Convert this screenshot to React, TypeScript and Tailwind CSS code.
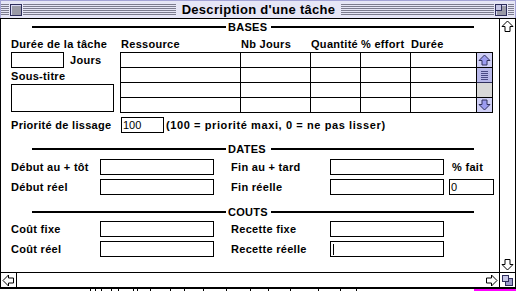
import React from "react";

function Stripes({ className = "" }: { className?: string }) {
  return (
    <div className={`flex flex-col gap-px ${className}`}>
      {[0, 1, 2, 3, 4, 5].map((i) => (
        <div key={i} className="h-px bg-[#7c7c8e]" />
      ))}
    </div>
  );
}

function Rule({ label }: { label: string }) {
  return (
    <div className="flex items-center h-[12px] ml-[21px]">
      <div className="w-[194px] h-[2px] bg-black" />
      <span className="w-[45px] pl-[2px] leading-none">{label}</span>
      <div className="w-[203px] h-[2px] bg-black" />
    </div>
  );
}

function Field({ w, children }: { w: string; children?: React.ReactNode }) {
  return (
    <div className={`${w} h-[16px] border border-black bg-white flex items-center pl-[1px] font-normal tracking-normal`}>
      {children}
    </div>
  );
}

function HollowArrow({ dir }: { dir: "up" | "down" | "left" | "right" }) {
  const rot = { up: 0, down: 180, left: 270, right: 90 }[dir];
  return (
    <svg width="13" height="13" viewBox="0 0 13 13">
      <polygon
        transform={`rotate(${rot} 6.5 6.5)`}
        points="6.5,1 12,6.5 9,6.5 9,11.5 4,11.5 4,6.5 1,6.5"
        fill="white"
        stroke="black"
        strokeWidth="1"
        strokeLinejoin="miter"
      />
    </svg>
  );
}

function ListArrow({ dir }: { dir: "up" | "down" }) {
  return (
    <svg width="13" height="12" viewBox="0 0 13 12">
      <polygon
        transform={dir === "down" ? "rotate(180 6.5 6)" : undefined}
        points="6.5,1 12,6.5 9,6.5 9,11 4,11 4,6.5 1,6.5"
        fill="#9c9cf0"
        stroke="#30305c"
        strokeWidth="1"
      />
    </svg>
  );
}

const cols = [
  { label: "Ressource", head: "w-[120px]", cell: "w-[119px]" },
  { label: "Nb Jours", head: "w-[70px]", cell: "w-[70px] border-l border-black" },
  { label: "Quantité", head: "w-[50px]", cell: "w-[50px] border-l border-black" },
  { label: "% effort", head: "w-[50px]", cell: "w-[50px] border-l border-black" },
  { label: "Durée", head: "w-[66px]", cell: "w-[66px] border-l border-black" },
];

const rows = ["h-[15px] border-b border-black", "h-[15px] border-b border-black", "h-[15px] border-b border-black", "h-[14px]"];

const ticks = [90, 95, 101, 111, 118, 133, 137, 150, 170, 184, 203, 226, 250, 268, 290, 318, 340, 356];

export default function App() {
  return (
    <div className="w-[516px] h-[291px] bg-white overflow-hidden text-black text-[11px] font-bold tracking-[0.3px] font-['Liberation_Sans',Arial,sans-serif]">
      <div className="flex flex-col w-[516px] h-[289px]">
        {/* title bar */}
        <div className="flex items-center h-[18px] shrink-0 bg-[#e6e6f6] border-t border-x border-[#a3a3d6] pr-[1px]">
          <Stripes className="w-[8px]" />
          <div className="ml-[1px] w-[12px] h-[12px] border border-[#2e2e5c] bg-[#9a9aa6] shadow-[inset_1px_1px_0_#d8d8f4]" />
          <Stripes className="ml-[1px] flex-1" />
          <div className="px-[6px] text-[13px] leading-none tracking-[0.3px]">Description d'une tâche</div>
          <Stripes className="flex-1" />
          <div className="ml-[1px] w-[12px] h-[12px] border border-[#2e2e5c] bg-[#9a9aa6] shadow-[inset_1px_1px_0_#d8d8f4] flex items-start justify-start">
            <div className="w-[6px] h-[6px] border-r border-b border-[#2e2e5c] bg-[#c4c4e4]" />
          </div>
          <Stripes className="ml-[1px] w-[6px]" />
        </div>
        <div className="h-px bg-black shrink-0" />

        {/* body */}
        <div className="flex h-[253px] shrink-0 border-x border-black">
          <div className="flex-1 flex flex-col pl-[10px] pt-[2px]">
            <Rule label="BASES" />

            <div className="flex mt-[5px]">
              <div className="w-[109px] flex flex-col">
                <div className="h-[14px] leading-[13px] whitespace-nowrap">Durée de la tâche</div>
                <div className="flex items-center h-[16px]">
                  <Field w="w-[53px]" />
                  <span className="ml-[6px]">Jours</span>
                </div>
                <div className="mt-[2px] h-[13px] leading-[13px]">Sous-titre</div>
                <div className="mt-[1px] w-[103px] h-[28px] border border-black" />
              </div>

              <div className="flex flex-col">
                <div className="flex h-[14px] leading-[13px]">
                  {cols.map((c) => (
                    <div key={c.label} className={`${c.head} pl-[1px] whitespace-nowrap`}>
                      {c.label}
                    </div>
                  ))}
                </div>
                <div className="flex w-[373px] border border-black">
                  <div className="flex flex-col">
                    {rows.map((r, i) => (
                      <div key={i} className={`flex ${r}`}>
                        {cols.map((c) => (
                          <div key={c.label} className={c.cell} />
                        ))}
                      </div>
                    ))}
                  </div>
                  <div className="w-[16px] border-l border-black flex flex-col">
                    <div className="h-[15px] border-b border-black bg-[#cfcff6] flex items-center justify-center">
                      <ListArrow dir="up" />
                    </div>
                    <div className="h-[15px] border-b border-[#30305c] bg-[#b8b8ea] flex flex-col items-center justify-center gap-px">
                      {[0, 1, 2, 3, 4].map((i) => (
                        <div key={i} className="w-[7px] h-px bg-[#4a4a86]" />
                      ))}
                    </div>
                    <div className="h-[15px] border-b border-black bg-[#d8d8d8] bg-[radial-gradient(#8a8a8a_0.6px,transparent_0.7px)] bg-[length:2px_2px]" />
                    <div className="h-[14px] bg-[#cfcff6] flex items-center justify-center">
                      <ListArrow dir="down" />
                    </div>
                  </div>
                </div>
              </div>
            </div>

            <div className="flex items-center h-[16px] mt-[4px]">
              <div className="w-[110px] whitespace-nowrap">Priorité de lissage</div>
              <Field w="w-[43px]">100</Field>
              <span className="ml-[2px] tracking-[0.6px] whitespace-nowrap">(100 = priorité maxi, 0 = ne pas lisser)</span>
            </div>

            <div className="mt-[10px]">
              <Rule label="DATES" />
            </div>
            <div className="flex items-center h-[16px] mt-[4px]">
              <div className="w-[89px]">Début au + tôt</div>
              <Field w="w-[114px]" />
              <div className="ml-[17px] w-[99px]">Fin au + tard</div>
              <Field w="w-[114px]" />
              <div className="ml-[5px] pl-[3px]">% fait</div>
            </div>
            <div className="flex items-center h-[16px] mt-[4px]">
              <div className="w-[89px]">Début réel</div>
              <Field w="w-[114px]" />
              <div className="ml-[17px] w-[99px]">Fin réelle</div>
              <Field w="w-[114px]" />
              <div className="ml-[5px]">
                <Field w="w-[45px]">0</Field>
              </div>
            </div>

            <div className="mt-[11px]">
              <Rule label="COUTS" />
            </div>
            <div className="flex items-center h-[16px] mt-[3px]">
              <div className="w-[89px]">Coût fixe</div>
              <Field w="w-[114px]" />
              <div className="ml-[17px] w-[99px]">Recette fixe</div>
              <Field w="w-[114px]" />
            </div>
            <div className="flex items-center h-[16px] mt-[4px]">
              <div className="w-[89px]">Coût réel</div>
              <Field w="w-[114px]" />
              <div className="ml-[17px] w-[99px]">Recette réelle</div>
              <Field w="w-[114px]">
                <div className="w-px h-[11px] bg-black ml-px" />
              </Field>
            </div>
          </div>

          <div className="w-[16px] border-l border-black flex flex-col justify-between items-center pt-[1px] pb-[1px]">
            <HollowArrow dir="up" />
            <HollowArrow dir="down" />
          </div>
        </div>

        {/* horizontal scroll bar */}
        <div className="flex h-[17px] shrink-0 border-t border-x border-b-2 border-black">
          <div className="w-[16px] border-r border-black flex items-center justify-center">
            <HollowArrow dir="left" />
          </div>
          <div className="flex-1" />
          <div className="w-[15px] flex items-center justify-center">
            <HollowArrow dir="right" />
          </div>
          <div className="w-[16px] border-l border-black flex items-center justify-center">
            <svg width="11" height="11" viewBox="0 0 11 11">
              <rect x="3.5" y="3.5" width="7" height="7" fill="#9a9acc" stroke="#2e2e5c" />
              <rect x="0.5" y="0.5" width="6" height="6" fill="#c8c8e8" stroke="#2e2e5c" />
            </svg>
          </div>
        </div>
      </div>

      {/* desktop below the window */}
      <div className="flex h-[2px]">
        <div className="flex-1 flex">
          {ticks.map((x, i) => (
            <div key={i} className="w-px h-[2px] bg-black" style={{ marginLeft: i === 0 ? x : x - ticks[i - 1] - 1 }} />
          ))}
        </div>
        <div className="w-[42px] bg-[#ff00ff]" />
      </div>
    </div>
  );
}
